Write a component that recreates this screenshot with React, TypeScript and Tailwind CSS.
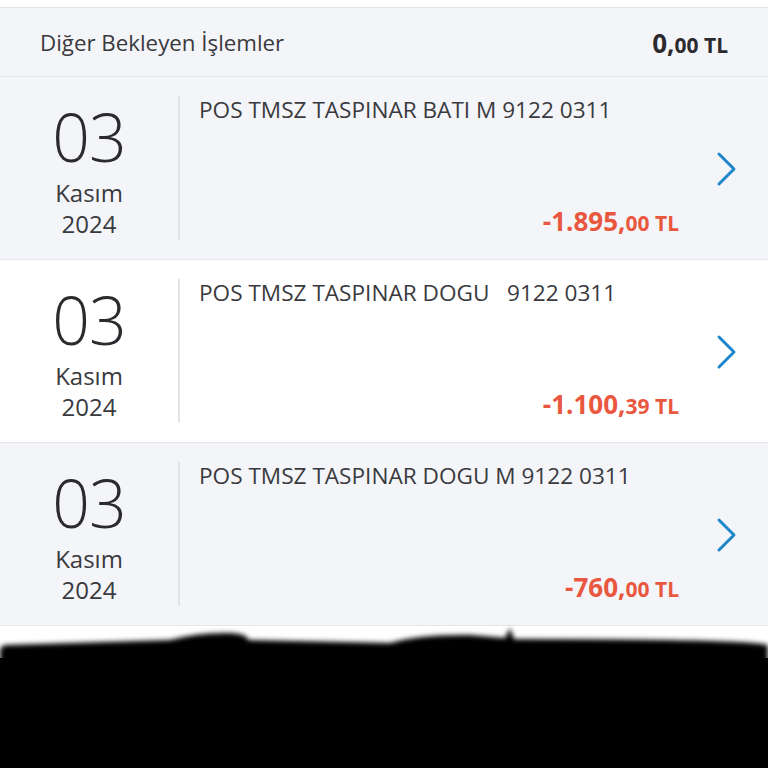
const rows = [
  { desc: "POS TMSZ TASPINAR BATI M 9122 0311", whole: "-1.895", dec: "00", bg: "bg-[#f4f5f9]" },
  { desc: "POS TMSZ TASPINAR DOGU\u00a0\u00a0\u00a09122 0311", whole: "-1.100", dec: "39", bg: "bg-white" },
  { desc: "POS TMSZ TASPINAR DOGU M 9122 0311", whole: "-760", dec: "00", bg: "bg-[#f4f5f9]" },
];

function Chevron() {
  return (
    <svg width="22" height="36" viewBox="0 0 22 36" fill="none">
      <path d="M3 3 L18 18 L3 33" stroke="#1f86cc" strokeWidth="3" strokeLinecap="round" strokeLinejoin="round" />
    </svg>
  );
}

function Row({ desc, whole, dec, bg }: { desc: string; whole: string; dec: string; bg: string }) {
  return (
    <div className={`${bg} h-[183px] flex flex-row items-stretch border-b border-[#e6e7ec]`}>
      <div className="w-[178px] flex flex-col items-center pt-[28px] text-[#2b2b2f]">
        <div className="text-[66px] font-light leading-[62px] tracking-[-1px]">03</div>
        <div className="text-[24px] leading-[31px] mt-[10px] text-[#3a3a3e]">Kasım</div>
        <div className="text-[24px] leading-[31px] text-[#3a3a3e]">2024</div>
      </div>
      <div className="w-[2px] bg-[#e3e4ea] my-[19px]" />
      <div className="flex-1 flex flex-col pl-[19px] pt-[18px] pb-[18px]">
        <div className="text-[22.6px] text-[#3a3a3e] leading-[30px] whitespace-pre">{desc}</div>
        <div className="flex-1" />
        <div className="text-right pr-[89px] text-[#e9573f] font-bold leading-[32px]">
          <span className="text-[26px]">{whole},</span>
          <span className="text-[21px]">{dec} TL</span>
        </div>
      </div>
      <div className="absolute right-[30px] mt-[74px]">
        <Chevron />
      </div>
    </div>
  );
}

export default function App() {
  return (
    <div className="w-[768px] h-[768px] bg-white overflow-hidden relative" style={{ fontFamily: '"Open Sans", "Noto Sans", sans-serif' }}>
      <div className="h-[8px] bg-white border-b border-[#e3e4ea]" />
      <div className="h-[69px] bg-[#f4f5f9] flex flex-row items-center justify-between px-[40px] border-b border-[#e6e7ec]">
        <div className="text-[22.3px] text-[#3a3a3e] pt-[2px]">Diğer Bekleyen İşlemler</div>
        <div className="font-bold text-[#2b2b2f] pt-[2px]">
          <span className="text-[26px]">0,</span>
          <span className="text-[21px]">00 TL</span>
        </div>
      </div>
      {rows.map((r, i) => (
        <Row key={i} {...r} />
      ))}
      <div className="absolute left-0 right-0 top-[622px] bottom-0">
        <svg width="768" height="146" viewBox="0 0 768 146" className="block">
          <defs>
            <filter id="b" x="-5%" y="-20%" width="110%" height="140%">
              <feGaussianBlur stdDeviation="2.5" />
            </filter>
          </defs>
          <path
            d="M0 28 Q0 24 6 23 L170 18 Q200 10 230 11 Q248 12 248 18 L390 21 Q420 12 470 13 L505 16 L510 6 L514 17 Q768 17 768 24 L768 146 L0 146 Z"
            fill="#000"
            filter="url(#b)"
          />
          <rect x="0" y="36" width="768" height="110" fill="#000" />
        </svg>
      </div>
    </div>
  );
}
